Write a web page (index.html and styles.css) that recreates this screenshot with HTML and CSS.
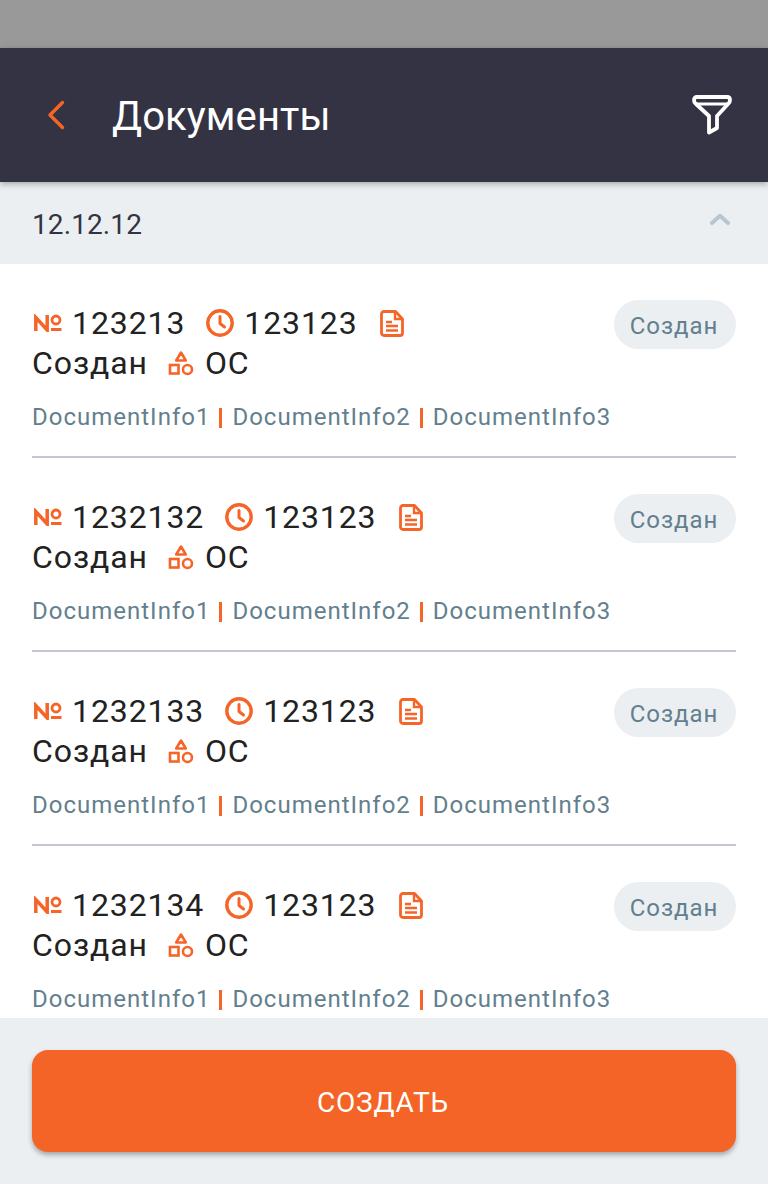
FILE: index.html
```html
<!DOCTYPE html>
<html lang="ru">
<head>
    <meta charset="UTF-8">
    <title>Документы</title>
    <link rel="stylesheet" href="styles.css">
</head>
<body>
<svg class="defs" width="0" height="0">
    <symbol id="i-no" viewBox="0 0 28 18">
        <path d="M1.800 17V3.500L13.200 16V1" fill="none" stroke="currentColor" stroke-width="3.500"/>
        <circle cx="22" cy="6" r="4" fill="none" stroke="currentColor" stroke-width="2.800"/>
        <rect x="17" y="14" width="10.500" height="3" fill="currentColor"/>
    </symbol>
    <symbol id="i-clock" viewBox="0 0 28 28">
        <circle cx="14" cy="14" r="12.200" fill="none" stroke="currentColor" stroke-width="3.400"/>
        <path d="M14 7.500V14.500L18.500 18" fill="none" stroke="currentColor" stroke-width="3" stroke-linecap="round" stroke-linejoin="round"/>
    </symbol>
    <symbol id="i-doc" viewBox="0 0 24 27">
        <path d="M4 1.500H15.500L22.500 9V23A2.500 2.500 0 0 1 20 25.500H4A2.500 2.500 0 0 1 1.500 23V4A2.500 2.500 0 0 1 4 1.500Z" fill="none" stroke="currentColor" stroke-width="2.800" stroke-linejoin="round"/>
        <path d="M15 2V9H22" fill="none" stroke="currentColor" stroke-width="2.400"/>
        <path d="M6 12H12M6 16H18M6 20.500H18" fill="none" stroke="currentColor" stroke-width="2.400"/>
    </symbol>
    <symbol id="i-shapes" viewBox="0 0 26 26">
        <path d="M13 2.500L17.800 10.500H8.200Z" fill="none" stroke="currentColor" stroke-width="2.600" stroke-linejoin="round"/>
        <rect x="2" y="15" width="8.500" height="8.500" fill="none" stroke="currentColor" stroke-width="2.600"/>
        <circle cx="19.500" cy="19.500" r="4.500" fill="none" stroke="currentColor" stroke-width="2.600"/>
    </symbol>
</svg>

<div class="page">
    <div class="status"></div>
    <div class="header">
        <svg class="back" width="20" height="30" viewBox="0 0 20 30">
            <path d="M16.500 2.500L4 15L16.500 27.500" fill="none" stroke="#f56528" stroke-width="3.400" stroke-linecap="round" stroke-linejoin="round"/>
        </svg>
        <div class="title">Документы</div>
        <svg class="filter" width="42" height="42" viewBox="0 0 42 42">
            <path d="M6 3H36Q39 3 39 6Q39 8 37.500 9.500L26 22V34L18 38.500V22L4.500 9.500Q3 8 3 6Q3 3 6 3Z" fill="none" stroke="#fff" stroke-width="3.800" stroke-linejoin="round"/>
            <path d="M4 10H38" fill="none" stroke="#fff" stroke-width="2.800"/>
        </svg>
    </div>
    <div class="date-bar">
        <span class="date">12.12.12</span>
        <svg class="collapse" width="20" height="12" viewBox="0 0 20 12">
            <path d="M2 10L10 2.800L18 10" fill="none" stroke="#b8c6cd" stroke-width="4" stroke-linecap="round" stroke-linejoin="round"/>
        </svg>
    </div>

    <div class="list">
        <div class="item">
            <div class="item-top">
                <div class="item-main">
                    <div class="line">
                        <svg class="ico-no"><use href="#i-no"/></svg><span class="num">123213</span>
                        <svg class="ico-clock"><use href="#i-clock"/></svg><span class="time">123123</span>
                        <svg class="ico-doc"><use href="#i-doc"/></svg>
                    </div>
                    <div class="line">
                        <span>Создан</span>
                        <svg class="ico-shapes"><use href="#i-shapes"/></svg><span>ОС</span>
                    </div>
                </div>
                <div class="badge">Создан</div>
            </div>
            <div class="info">DocumentInfo1<i></i>DocumentInfo2<i></i>DocumentInfo3</div>
        </div>
        <div class="item">
            <div class="item-top">
                <div class="item-main">
                    <div class="line">
                        <svg class="ico-no"><use href="#i-no"/></svg><span class="num">1232132</span>
                        <svg class="ico-clock"><use href="#i-clock"/></svg><span class="time">123123</span>
                        <svg class="ico-doc"><use href="#i-doc"/></svg>
                    </div>
                    <div class="line">
                        <span>Создан</span>
                        <svg class="ico-shapes"><use href="#i-shapes"/></svg><span>ОС</span>
                    </div>
                </div>
                <div class="badge">Создан</div>
            </div>
            <div class="info">DocumentInfo1<i></i>DocumentInfo2<i></i>DocumentInfo3</div>
        </div>
        <div class="item">
            <div class="item-top">
                <div class="item-main">
                    <div class="line">
                        <svg class="ico-no"><use href="#i-no"/></svg><span class="num">1232133</span>
                        <svg class="ico-clock"><use href="#i-clock"/></svg><span class="time">123123</span>
                        <svg class="ico-doc"><use href="#i-doc"/></svg>
                    </div>
                    <div class="line">
                        <span>Создан</span>
                        <svg class="ico-shapes"><use href="#i-shapes"/></svg><span>ОС</span>
                    </div>
                </div>
                <div class="badge">Создан</div>
            </div>
            <div class="info">DocumentInfo1<i></i>DocumentInfo2<i></i>DocumentInfo3</div>
        </div>
        <div class="item">
            <div class="item-top">
                <div class="item-main">
                    <div class="line">
                        <svg class="ico-no"><use href="#i-no"/></svg><span class="num">1232134</span>
                        <svg class="ico-clock"><use href="#i-clock"/></svg><span class="time">123123</span>
                        <svg class="ico-doc"><use href="#i-doc"/></svg>
                    </div>
                    <div class="line">
                        <span>Создан</span>
                        <svg class="ico-shapes"><use href="#i-shapes"/></svg><span>ОС</span>
                    </div>
                </div>
                <div class="badge">Создан</div>
            </div>
            <div class="info">DocumentInfo1<i></i>DocumentInfo2<i></i>DocumentInfo3</div>
        </div>
    </div>

    <div class="footer">
        <div class="create">СОЗДАТЬ</div>
    </div>
</div>
</body>
</html>
```

FILE: styles.css
```css
*{
    margin:0;
    padding:0;
    box-sizing:border-box;
}
html,body{
    height:100%;
    overflow:hidden;
}
body{
    font-family:Roboto,"Noto Sans",sans-serif;
    background-color:#fff;
}
.defs{
    position:absolute;
}
.page{
    height:1184px;
    display:flex;
    flex-direction:column;
}
.status{
    height:48px;
    flex:none;
    background-color:#999;
}
.header{
    height:134px;
    flex:none;
    display:flex;
    align-items:center;
    padding:0 35px 0 46px;
    background-color:#343343;
    box-shadow:0 2px 6px rgba(0,0,0,.3);
    position:relative;
    z-index:2;
}
.back{
    margin-right:46px;
}
.title{
    flex:1;
    margin-top:4px;
    font-size:40px;
    line-height:48px;
    letter-spacing:.1px;
    color:#fff;
}
.date-bar{
    height:82px;
    flex:none;
    display:flex;
    align-items:center;
    justify-content:space-between;
    padding:0 38px 0 32px;
    background-color:#ebeff2;
}
.date{
    margin-top:2px;
    font-size:28px;
    letter-spacing:.1px;
    color:#343343;
}
.collapse{
    margin-bottom:8px;
}
.list{
    flex:1;
    min-height:0;
    overflow:hidden;
    padding:0 32px;
    background-color:#fff;
}
.item{
    height:194px;
    padding-top:36px;
    border-bottom:2px solid #c4c7d3;
}
.item-top{
    display:flex;
    justify-content:space-between;
    align-items:flex-start;
}
.item-main{
    margin-top:3px;
}
.line{
    display:flex;
    align-items:center;
    height:40px;
    font-size:32px;
    letter-spacing:.9px;
    color:#222;
}
.ico-no,.ico-clock,.ico-doc,.ico-shapes{
    flex:none;
    color:#f56528;
}
.ico-no{
    width:28px;
    height:18px;
    margin:0 10px 0 2px;
}
.ico-clock{
    width:28px;
    height:28px;
    margin:0 10px 0 21px;
}
.ico-doc{
    width:24px;
    height:27px;
    margin-left:22px;
}
.ico-shapes{
    width:26px;
    height:26px;
    margin:0 11px 0 20px;
}
.badge{
    width:122px;
    height:49px;
    line-height:53px;
    padding-right:2px;
    text-align:center;
    border-radius:25px;
    font-size:24px;
    letter-spacing:.95px;
    color:#637f8e;
    background-color:#ebeff2;
}
.info{
    margin-top:19px;
    display:flex;
    align-items:center;
    font-size:24px;
    line-height:30px;
    letter-spacing:1px;
    color:#637f8e;
}
.info i{
    width:3px;
    height:20px;
    margin:2px 10px 0 9px;
    background-color:#f56528;
}
.footer{
    height:166px;
    flex:none;
    padding:32px 32px 0;
    background-color:#ebeff2;
}
.create{
    height:102px;
    line-height:106px;
    padding-right:2px;
    text-align:center;
    font-size:28px;
    letter-spacing:.8px;
    color:#fff;
    border-radius:16px;
    background-color:#f46427;
    box-shadow:0 3px 5px rgba(0,0,0,.3);
}
```
